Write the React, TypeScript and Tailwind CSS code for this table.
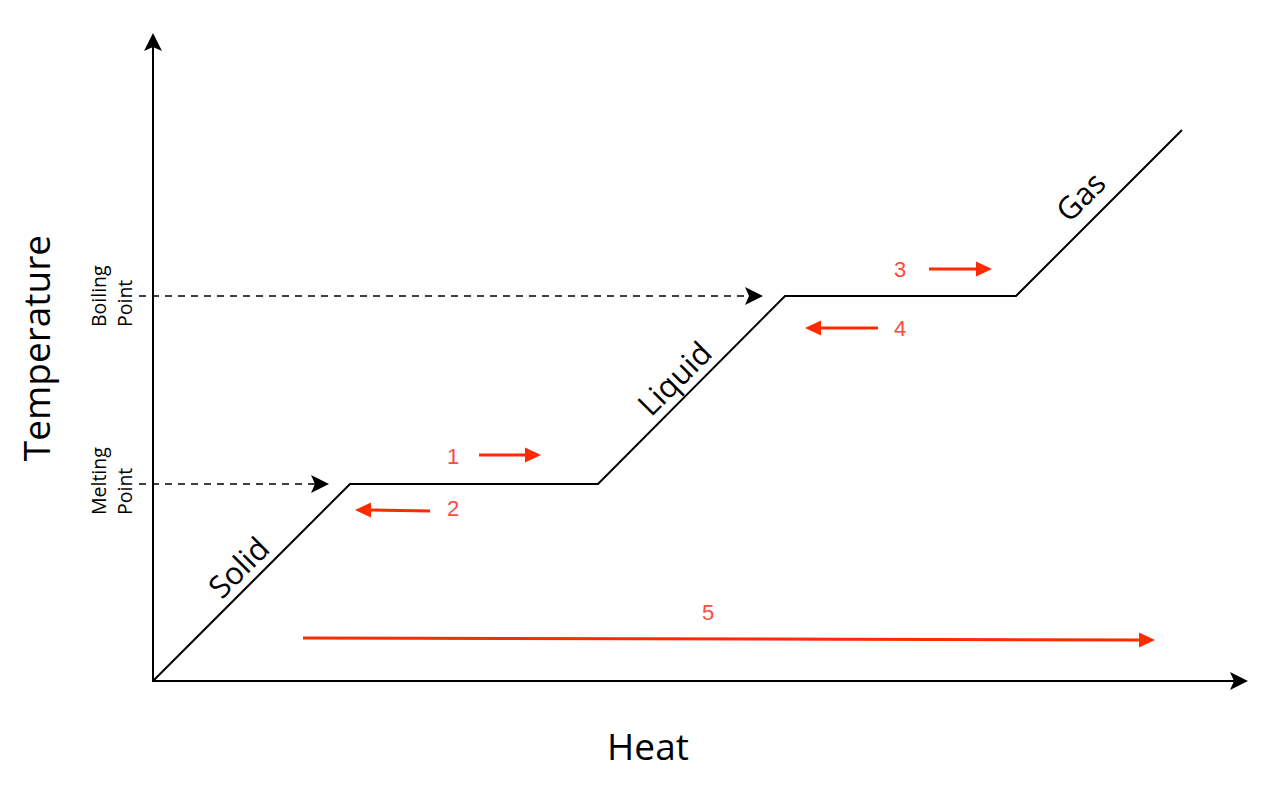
import React from "react";

const red = "#ff2a00";
const redText = "#ff4a3d";

function Stealth({ x, y, dir }: { x: number; y: number; dir: "up" | "right" }) {
  // concave black arrowhead, tip at (x, y)
  if (dir === "up") {
    return <path d={`M${x} ${y} L${x + 9} ${y + 18} L${x} ${y + 14} L${x - 9} ${y + 18} Z`} fill="#000" />;
  }
  return <path d={`M${x} ${y} L${x - 18} ${y - 9} L${x - 14} ${y} L${x - 18} ${y + 9} Z`} fill="#000" />;
}

function RedArrow({ x1, x2, y1, y2 }: { x1: number; x2: number; y1: number; y2: number }) {
  const d = x2 > x1 ? 1 : -1;
  const bx = x2 - d * 16;
  const by = y2;
  return (
    <g>
      <line x1={x1} y1={y1} x2={bx} y2={by} stroke={red} strokeWidth={3} />
      <path d={`M${x2} ${y2} L${bx} ${by - 7.5} L${bx} ${by + 7.5} Z`} fill={red} />
    </g>
  );
}

export default function App() {
  const sans = "'Open Sans', 'DejaVu Sans', sans-serif";
  const num = "'Liberation Sans', Arial, sans-serif";
  return (
    <div className="w-[1265px] h-[790px] bg-white">
      <svg width="1265" height="790" viewBox="0 0 1265 790">
        {/* axes */}
        <line x1={153} y1={682} x2={153} y2={46} stroke="#000" strokeWidth={2} />
        <Stealth x={153} y={33} dir="up" />
        <line x1={152} y1={681} x2={1234} y2={681} stroke="#000" strokeWidth={2} />
        <Stealth x={1248} y={681} dir="right" />

        {/* heating curve */}
        <polyline
          points="153,681 350,484 598,484 785,296 1016,296 1182,130"
          fill="none"
          stroke="#000"
          strokeWidth={2}
        />

        {/* dashed guides */}
        <line x1={139} y1={484} x2={318} y2={484} stroke="#000" strokeWidth={1.6} strokeDasharray="7 6" />
        <Stealth x={329} y={484} dir="right" />
        <line x1={139} y1={296} x2={752} y2={296} stroke="#000" strokeWidth={1.6} strokeDasharray="7 6" />
        <Stealth x={763} y={296} dir="right" />

        {/* red arrows */}
        <RedArrow x1={479} x2={541} y1={455} y2={455} />
        <RedArrow x1={430} x2={355} y1={511} y2={510} />
        <RedArrow x1={929} x2={992} y1={269} y2={269} />
        <RedArrow x1={878} x2={805} y1={328} y2={328} />
        <RedArrow x1={303} x2={1155} y1={638} y2={640} />

        {/* numbers */}
        <g fill={redText} fontFamily={num} fontSize={22} textAnchor="middle">
          <text x={453} y={464}>1</text>
          <text x={453} y={516}>2</text>
          <text x={900} y={277}>3</text>
          <text x={900} y={336}>4</text>
          <text x={708} y={620}>5</text>
        </g>

        {/* phase labels */}
        <g fontFamily={sans} fontSize={31} fill="#000" textAnchor="middle" dominantBaseline="central">
          <text transform="translate(238 567) rotate(-45)">Solid</text>
          <text transform="translate(674 378) rotate(-45)">Liquid</text>
          <text transform="translate(1080 196) rotate(-45)">Gas</text>
        </g>

        {/* axis titles */}
        <text
          transform="translate(35 348) rotate(-90)"
          fontFamily={sans}
          fontSize={37}
          textAnchor="middle"
          dominantBaseline="central"
        >
          Temperature
        </text>
        <text x={648} y={760} fontFamily={sans} fontSize={37} textAnchor="middle">
          Heat
        </text>

        {/* point labels */}
        <g fontFamily={sans} fontSize={19.5}>
          <text transform="translate(106 327) rotate(-90)">Boiling</text>
          <text transform="translate(132 327) rotate(-90)">Point</text>
          <text transform="translate(106 515) rotate(-90)">Melting</text>
          <text transform="translate(132 515) rotate(-90)">Point</text>
        </g>
      </svg>
    </div>
  );
}
